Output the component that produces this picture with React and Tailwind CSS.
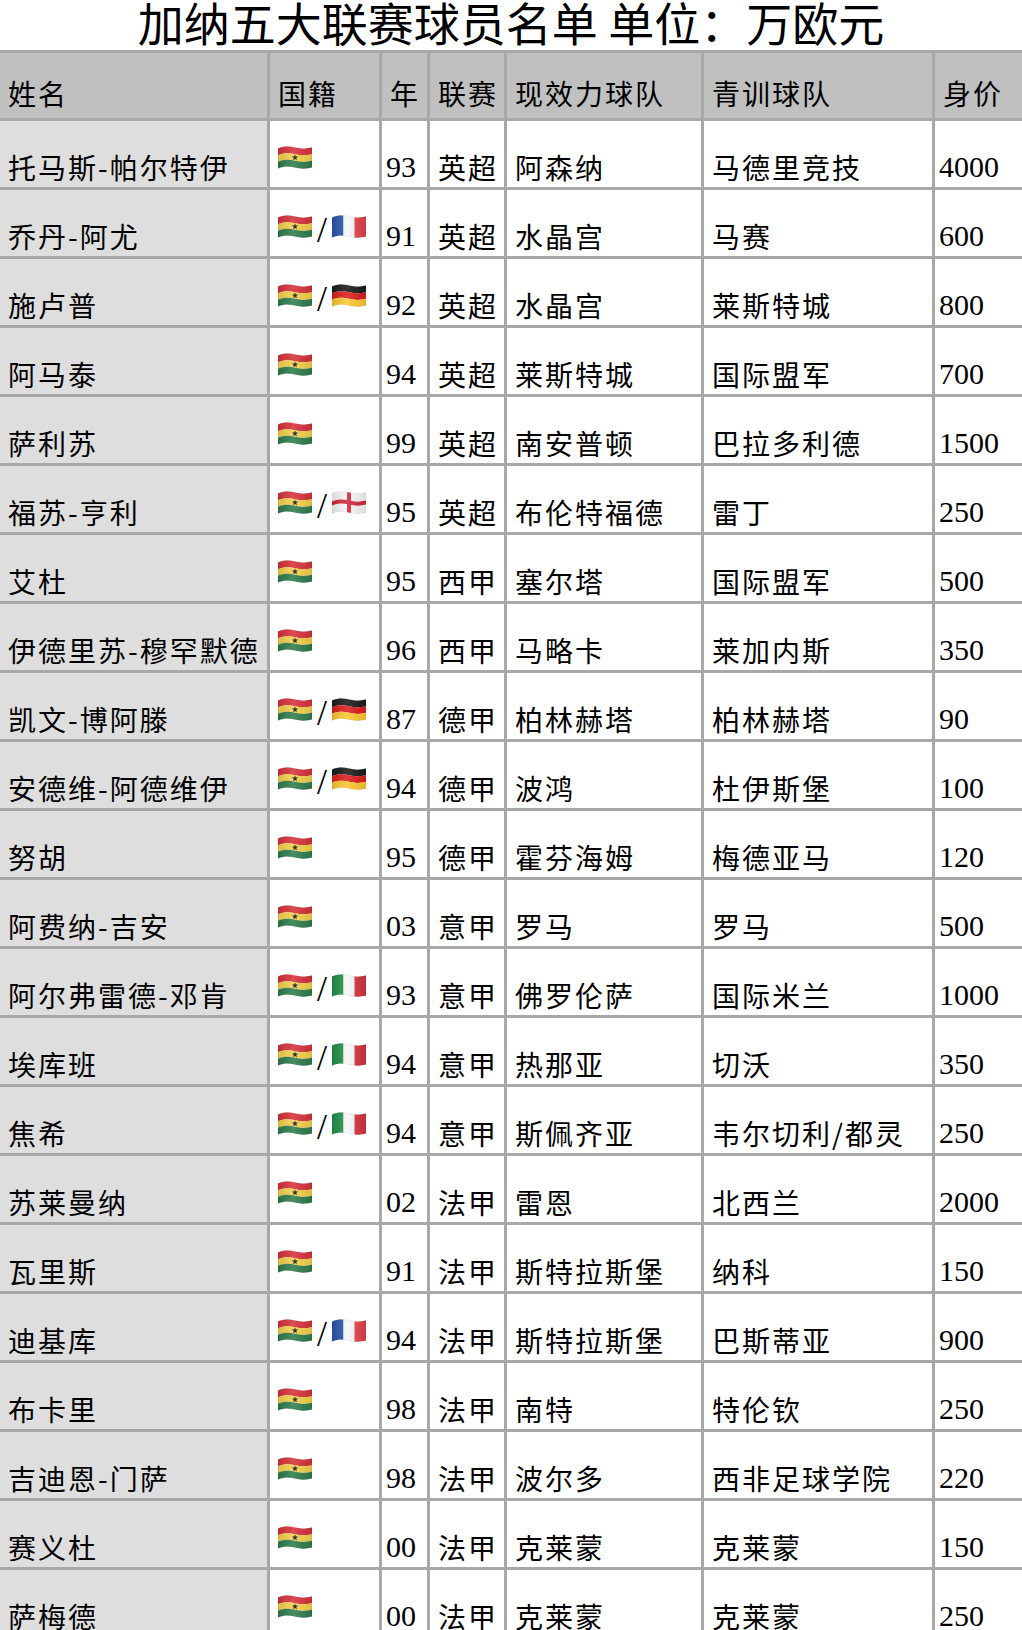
import { useId } from 'react';

// 加纳五大联赛球员名单 — plain grid table, gray gaps act as the cell borders.

const players = [
  ['托马斯-帕尔特伊', ['gh'], '93', '英超', '阿森纳', '马德里竞技', '4000'],
  ['乔丹-阿尤', ['gh', 'fr'], '91', '英超', '水晶宫', '马赛', '600'],
  ['施卢普', ['gh', 'de'], '92', '英超', '水晶宫', '莱斯特城', '800'],
  ['阿马泰', ['gh'], '94', '英超', '莱斯特城', '国际盟军', '700'],
  ['萨利苏', ['gh'], '99', '英超', '南安普顿', '巴拉多利德', '1500'],
  ['福苏-亨利', ['gh', 'en'], '95', '英超', '布伦特福德', '雷丁', '250'],
  ['艾杜', ['gh'], '95', '西甲', '塞尔塔', '国际盟军', '500'],
  ['伊德里苏-穆罕默德', ['gh'], '96', '西甲', '马略卡', '莱加内斯', '350'],
  ['凯文-博阿滕', ['gh', 'de'], '87', '德甲', '柏林赫塔', '柏林赫塔', '90'],
  ['安德维-阿德维伊', ['gh', 'de'], '94', '德甲', '波鸿', '杜伊斯堡', '100'],
  ['努胡', ['gh'], '95', '德甲', '霍芬海姆', '梅德亚马', '120'],
  ['阿费纳-吉安', ['gh'], '03', '意甲', '罗马', '罗马', '500'],
  ['阿尔弗雷德-邓肯', ['gh', 'it'], '93', '意甲', '佛罗伦萨', '国际米兰', '1000'],
  ['埃库班', ['gh', 'it'], '94', '意甲', '热那亚', '切沃', '350'],
  ['焦希', ['gh', 'it'], '94', '意甲', '斯佩齐亚', '韦尔切利/都灵', '250'],
  ['苏莱曼纳', ['gh'], '02', '法甲', '雷恩', '北西兰', '2000'],
  ['瓦里斯', ['gh'], '91', '法甲', '斯特拉斯堡', '纳科', '150'],
  ['迪基库', ['gh', 'fr'], '94', '法甲', '斯特拉斯堡', '巴斯蒂亚', '900'],
  ['布卡里', ['gh'], '98', '法甲', '南特', '特伦钦', '250'],
  ['吉迪恩-门萨', ['gh'], '98', '法甲', '波尔多', '西非足球学院', '220'],
  ['赛义杜', ['gh'], '00', '法甲', '克莱蒙', '克莱蒙', '150'],
  ['萨梅德', ['gh'], '00', '法甲', '克莱蒙', '克莱蒙', '250'],
];

// wavy band between fractions a..b of the flag height
function band(a, b) {
  const h = 20;
  const t = a * h;
  const u = b * h;
  return `M0 ${2.5 + t} C6 ${t} 11 ${t} 17 ${1.5 + t} C23 ${3 + t} 28 ${3 + t} 34 ${1.5 + t} L34 ${1.5 + u} C28 ${3 + u} 23 ${3 + u} 17 ${1.5 + u} C11 ${u} 6 ${u} 0 ${2.5 + u} Z`;
}

function star(cx, cy, r1, r2) {
  const pts = [];
  for (let i = 0; i < 10; i++) {
    const ang = ((-90 + 36 * i) * Math.PI) / 180;
    const r = i % 2 === 0 ? r1 : r2;
    pts.push(`${(cx + r * Math.cos(ang)).toFixed(2)},${(cy + r * Math.sin(ang)).toFixed(2)}`);
  }
  return pts.join(' ');
}

function Flag({ code }) {
  const id = useId().replace(/:/g, '');
  const clip = `url(#c${id})`;
  let body = null;
  if (code === 'gh') {
    body = (
      <>
        <path d={band(0, 1 / 3)} fill="#d8323a" />
        <path d={band(1 / 3, 2 / 3)} fill="#f5d24a" />
        <path d={band(2 / 3, 1)} fill="#2f7d4d" />
        <polygon points={star(17, 11.6, 3.3, 1.35)} fill="#1a1a1a" />
      </>
    );
  } else if (code === 'de') {
    body = (
      <>
        <path d={band(0, 1 / 3)} fill="#1b1b1b" />
        <path d={band(1 / 3, 2 / 3)} fill="#dd1d1d" />
        <path d={band(2 / 3, 1)} fill="#fdc82f" />
      </>
    );
  } else if (code === 'fr' || code === 'it') {
    const [c1, c3] = code === 'fr' ? ['#2a56b0', '#e5414b'] : ['#23924a', '#d6343f'];
    body = (
      <g clipPath={clip}>
        <rect x="0" y="0" width="11.5" height="25" fill={c1} />
        <rect x="11.5" y="0" width="11" height="25" fill="#f7f7f7" />
        <rect x="22.5" y="0" width="11.5" height="25" fill={c3} />
      </g>
    );
  } else if (code === 'en') {
    body = (
      <>
        <path d={band(0, 1)} fill="#f7f7f7" />
        <path d={band(0.4, 0.6)} fill="#d7263a" />
        <g clipPath={clip}>
          <rect x="15" y="0" width="4" height="25" fill="#d7263a" />
        </g>
      </>
    );
  }
  return (
    <svg width="34" height="23" viewBox="0 0 34 23" className="block shrink-0">
      <defs>
        <clipPath id={`c${id}`}>
          <path d={band(0, 1)} />
        </clipPath>
        <linearGradient id={`g${id}`} x1="0" y1="0" x2="1" y2="0">
          <stop offset="0" stopColor="#000" stopOpacity="0.12" />
          <stop offset="0.45" stopColor="#fff" stopOpacity="0.12" />
          <stop offset="1" stopColor="#000" stopOpacity="0.1" />
        </linearGradient>
      </defs>
      {body}
      <path d={band(0, 1)} fill={`url(#g${id})`} stroke="rgba(0,0,0,0.12)" strokeWidth="0.5" />
    </svg>
  );
}

const cjk = "font-['Noto_Sans_CJK_SC',sans-serif] text-[28px] leading-[40px] tracking-[2px]";
const num = "font-['Liberation_Serif','Noto_Sans_CJK_SC',serif] text-[30px] leading-[40px]";

export default function App() {
  const heads = ['姓名', '国籍', '年', '联赛', '现效力球队', '青训球队', '身价'];

  return (
    <div className="w-[1022px] bg-white text-black overflow-hidden">
      <h1 className="h-[50px] text-center font-['Noto_Sans_CJK_SC',sans-serif] text-[46px] leading-[42px] font-normal whitespace-nowrap">
        加纳五大联赛球员名单 单位：万欧元
      </h1>

      <div className="grid grid-cols-[267px_109px_45px_74px_194px_228px_1fr] grid-rows-[65px] auto-rows-[66px] gap-[3px] pt-[3px] bg-[#a8a8a8]">
        {heads.map((h) => (
          <div key={h} className={`bg-[#bfc0bf] flex items-end pl-2 pb-[5px] whitespace-nowrap ${cjk}`}>
            {h}
          </div>
        ))}

        {players.map(([name, flags, year, league, club, youth, value]) => (
          <div key={name} className="contents">
            <div className={`bg-[#dedede] flex items-end pl-2 whitespace-nowrap overflow-hidden ${cjk}`}>{name}</div>
            <div className="bg-white flex items-start pl-2 pt-[25px] gap-[5px]">
              {flags.map((f, i) => (
                <div key={f} className="flex items-start gap-[5px]">
                  {i > 0 && (
                    <span className="font-['Liberation_Serif',serif] text-[36px] leading-[36px] -mt-[3px]">/</span>
                  )}
                  <Flag code={f} />
                </div>
              ))}
            </div>
            <div className={`bg-white flex items-end pl-1 ${num}`}>{year}</div>
            <div className={`bg-white flex items-end pl-2 whitespace-nowrap ${cjk}`}>{league}</div>
            <div className={`bg-white flex items-end pl-2 whitespace-nowrap ${cjk}`}>{club}</div>
            <div className={`bg-white flex items-end pl-2 whitespace-nowrap ${cjk}`}>{youth}</div>
            <div className={`bg-white flex items-end pl-1 ${num}`}>{value}</div>
          </div>
        ))}
      </div>
    </div>
  );
}
